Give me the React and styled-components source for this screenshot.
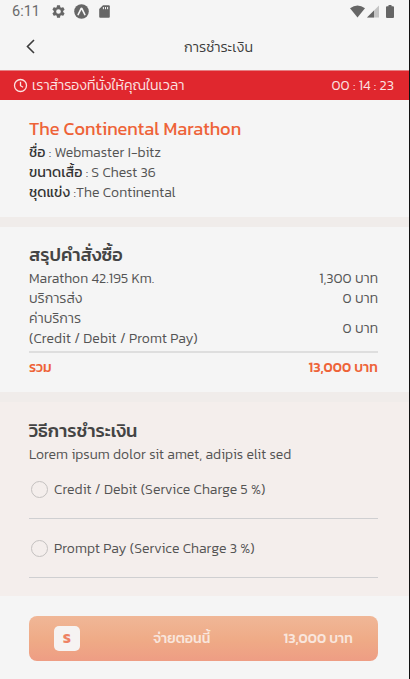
import React from 'react';
import styled, { createGlobalStyle } from 'styled-components';

const GlobalStyle = createGlobalStyle`
  * {
    box-sizing: border-box;
  }

  body {
    margin: 0;
    background: #f5f5f5;
    font-family: Kanit, Roboto, 'Noto Sans Thai', 'Noto Sans', sans-serif;
    font-size: 14px;
    color: #555;
  }
`;

const Screen = styled.div`
  display: flex;
  flex-direction: column;
  width: 410px;
  height: 679px;
  overflow: hidden;
  background: #f5f5f5;
  border-right: 1px solid #111;
`;

const Text = styled.span`
  font-size: ${({ $size }) => $size || 14}px;
  font-weight: ${({ $weight }) => $weight || 300};
  letter-spacing: ${({ $track }) => $track || 0}px;
  color: ${({ $color }) => $color || '#545454'};
  white-space: pre;
`;

const Clock = styled.span`
  width: 30px;
  font-family: Roboto, sans-serif;
  font-size: 14.5px;
  color: #6a6a6a;
`;

const StatusBar = styled.div`
  display: flex;
  align-items: center;
  justify-content: space-between;
  height: 23px;
  padding: 0 15px 0 12px;
`;

const StatusGroup = styled.div`
  display: flex;
  align-items: center;
  gap: ${({ $gap }) => $gap}px;

  svg {
    display: block;
  }
`;

const Header = styled.header`
  display: grid;
  grid-template-columns: 40px 1fr 11px;
  align-items: center;
  justify-items: center;
  height: 47px;
  padding: 0 11px 0 10px;
`;

const Banner = styled.div`
  display: flex;
  align-items: center;
  gap: 4px;
  height: 30px;
  padding: 0 15px 0 13px;
  background: #e0272e;
  box-shadow: inset 0 1px #e58083;
`;

const Timer = styled.div`
  margin-left: auto;
`;

const Section = styled.section`
  height: ${({ $height }) => $height}px;
  padding: ${({ $top }) => $top}px 31px 0 29px;
  background: ${({ $tint }) => ($tint ? '#f4eeec' : '#f5f5f5')};
`;

const Gap = styled.div`
  height: 10px;
  background: #f0ecea;
`;

const Line = styled.div`
  display: flex;
  align-items: center;
  justify-content: ${({ $between }) => ($between ? 'space-between' : 'flex-start')};
  height: ${({ $height }) => $height || 20}px;
`;

const Label = styled.div`
  display: flex;
  flex-direction: column;
  line-height: 20px;
`;

const Divider = styled.div`
  height: 2px;
  margin-top: 2px;
  background: #dedede;
`;

const Option = styled.div`
  display: flex;
  align-items: center;
  gap: 6px;
  height: 54px;
  padding: 0 0 5px 2px;
  border-bottom: 1px solid #cfcfd1;

  & + & {
    margin-top: 5px;
  }
`;

const Radio = styled.div`
  width: 17px;
  height: 17px;
  border: 1px solid #c4c1c0;
  border-radius: 50%;
`;

const Footer = styled.footer`
  padding: 20px 31px 0 29px;
`;

const PayButton = styled.button`
  display: flex;
  align-items: center;
  justify-content: space-between;
  width: 100%;
  height: 45px;
  padding: 0 25px;
  border: 0;
  border-radius: 8px;
  background: linear-gradient(#f0b797, #efaa86 55%, #ee9d84);
  font-family: inherit;
`;

const Badge = styled.div`
  display: flex;
  align-items: center;
  justify-content: center;
  width: 26px;
  height: 25px;
  border-radius: 5px;
  background: #f6f3f2;
`;

const GearIcon = () => (
  <svg width="13" height="13" viewBox="2 2 20 20" fill="#666">
    <path d="M19.14 12.94c.04-.3.06-.61.06-.94s-.02-.64-.07-.94l2.03-1.58a.49.49 0 0 0 .12-.61l-1.92-3.32a.49.49 0 0 0-.59-.22l-2.39.96a7 7 0 0 0-1.62-.94l-.36-2.54a.48.48 0 0 0-.48-.41h-3.84a.48.48 0 0 0-.47.41l-.36 2.54c-.59.24-1.13.57-1.62.94l-2.39-.96a.48.48 0 0 0-.59.22L2.74 8.87a.48.48 0 0 0 .12.61l2.03 1.58a6 6 0 0 0 0 1.88l-2.03 1.58a.49.49 0 0 0-.12.61l1.92 3.32c.12.22.37.29.59.22l2.39-.96c.5.38 1.03.7 1.62.94l.36 2.54c.05.24.24.41.48.41h3.84c.24 0 .44-.17.47-.41l.36-2.54a7 7 0 0 0 1.62-.94l2.39.96c.22.08.47 0 .59-.22l1.92-3.32a.48.48 0 0 0-.12-.61zM12 15.6a3.6 3.6 0 1 1 0-7.2 3.6 3.6 0 0 1 0 7.2z" />
  </svg>
);

const ExpoIcon = () => (
  <svg width="15" height="15" viewBox="0 0 15 15">
    <circle cx="7.5" cy="7.5" r="7.3" fill="#666" />
    <path d="M4.2 10.5 7 4.8q.5-.8 1 0l2.8 5.7" fill="none" stroke="#f5f5f5" strokeWidth="1.7" strokeLinecap="round" />
  </svg>
);

const CardIcon = () => (
  <svg width="11" height="13" viewBox="0 0 11 13">
    <path d="M4 .3h5.8q1 0 1 1v10.4q0 1-1 1H1.2q-1 0-1-1V4z" fill="#666" />
    <path d="M4.4 2v2.2M6.5 2v2.2M8.6 2v2.2" stroke="#f5f5f5" strokeWidth="1" />
  </svg>
);

const WifiIcon = () => (
  <svg width="15" height="13" viewBox="0 0 15 13">
    <path d="M0 3.3Q7.5-2.4 15 3.3L7.5 12.5z" fill="#666" />
  </svg>
);

const SignalIcon = () => (
  <svg width="17" height="13" viewBox="0 0 17 13">
    <path d="M12 .5v12H0z" fill="#c4c4c4" />
    <path d="M7 5.5v7H0z" fill="#666" />
  </svg>
);

const BatteryIcon = () => (
  <svg width="8" height="13" viewBox="0 0 8 13">
    <path d="M2.5 0h3v1.2H7q1 0 1 1v9.8q0 1-1 1H1q-1 0-1-1V2.2q0-1 1-1h1.5z" fill="#666" />
  </svg>
);

const BackIcon = () => (
  <svg width="9" height="15" viewBox="0 0 9 15">
    <path d="M8 1 1.5 7.5 8 14" fill="none" stroke="#3c3c3c" strokeWidth="1.6" />
  </svg>
);

const ClockIcon = () => (
  <svg width="15" height="15" viewBox="0 0 15 15" fill="none" stroke="#fbe3e3" strokeWidth="1.3">
    <circle cx="7.5" cy="7.5" r="6" />
    <path d="M7.5 3.7v4l2.600 1.500" />
  </svg>
);

const App = () => {
  return (
    <>
      <GlobalStyle />
      <Screen>
        <StatusBar>
          <StatusGroup $gap={9.5}>
            <Clock>6:11</Clock>
            <GearIcon />
            <ExpoIcon />
            <CardIcon />
          </StatusGroup>
          <StatusGroup $gap={2}>
            <WifiIcon />
            <SignalIcon />
            <BatteryIcon />
          </StatusGroup>
        </StatusBar>
        <Header>
          <BackIcon />
          <Text $size={14.2} $color="#3c3c3c">การชำระเงิน</Text>
        </Header>
        <Banner>
          <ClockIcon />
          <Text $size={14.1} $color="#fbe3e3">เราสำรองที่นั่งให้คุณในเวลา</Text>
          <Timer>
            <Text $color="#fbe3e3" $track={0.05}>00 : 14 : 23</Text>
          </Timer>
        </Banner>
        <Section $height={117} $top={15}>
          <Line $height={27}>
            <Text $size={18.2} $weight={400} $color="#ee6338">The Continental Marathon</Text>
          </Line>
          <Line>
            <Text $size={14.2} $weight={400} $color="#333">ชื่อ</Text>
            <Text $track={0.06}> : Webmaster I-bitz</Text>
          </Line>
          <Line>
            <Text $size={14.2} $weight={400} $color="#333">ขนาดเสื้อ</Text>
            <Text $track={0.05}> : S Chest 36</Text>
          </Line>
          <Line>
            <Text $size={14.2} $weight={400} $color="#333">ชุดแข่ง</Text>
            <Text $track={0.05}> :The Continental</Text>
          </Line>
        </Section>
        <Gap />
        <Section $height={165} $top={14}>
          <Line $height={27}>
            <Text $size={18.2} $weight={500} $color="#444">สรุปคำสั่งซื้อ</Text>
          </Line>
          <Line $between>
            <Text $track={0.05}>Marathon 42.195 Km.</Text>
            <Text>1,300 บาท</Text>
          </Line>
          <Line $between>
            <Text>บริการส่ง</Text>
            <Text>0 บาท</Text>
          </Line>
          <Line $between $height={41}>
            <Label>
              <Text>ค่าบริการ</Text>
              <Text $track={0.05}>(Credit / Debit / Promt Pay)</Text>
            </Label>
            <Text>0 บาท</Text>
          </Line>
          <Divider />
          <Line $between $height={28}>
            <Text $weight={500} $color="#ee6338">รวม</Text>
            <Text $weight={500} $color="#ee6338">13,000 บาท</Text>
          </Line>
        </Section>
        <Gap />
        <Section $height={194} $top={15} $tint>
          <Line $height={26}>
            <Text $size={18.3} $weight={500} $color="#444">วิธีการชำระเงิน</Text>
          </Line>
          <Line $height={22}>
            <Text $track={0.05}>Lorem ipsum dolor sit amet, adipis elit sed</Text>
          </Line>
          <Option>
            <Radio />
            <Text $track={0.06}>Credit / Debit (Service Charge 5 %)</Text>
          </Option>
          <Option>
            <Radio />
            <Text $track={0.06}>Prompt Pay (Service Charge 3 %)</Text>
          </Option>
        </Section>
        <Footer>
          <PayButton>
            <Badge>
              <Text $size={14} $weight={700} $color="#ee8264">S</Text>
            </Badge>
            <Text $weight={500} $color="#f9e6dd">จ่ายตอนนี้</Text>
            <Text $weight={500} $color="#f9e6dd">13,000 บาท</Text>
          </PayButton>
        </Footer>
      </Screen>
    </>
  );
};

export default App;
